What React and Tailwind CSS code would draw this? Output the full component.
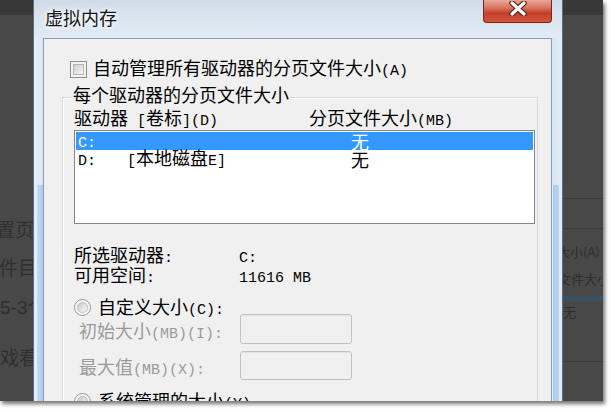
import React from "react";

const isLatin = (ch) => ch.charCodeAt(0) < 0x2e80;

function M({ text }) {
  const runs = [];
  for (const ch of text) {
    const l = isLatin(ch);
    const last = runs[runs.length - 1];
    if (last && last.l === l) last.s += ch;
    else runs.push({ l, s: ch });
  }
  return runs.map((r, i) =>
    r.l ? (
      <span key={i} className="font-['Liberation_Mono',monospace] text-[15px] whitespace-pre">
        {r.s}
      </span>
    ) : (
      <span key={i}>{r.s}</span>
    )
  );
}

function Checkbox() {
  return (
    <div className="w-[17px] h-[17px] shrink-0 border border-[#8f8f8f] bg-[#f4f4f4] p-[2px]">
      <div className="w-full h-full border border-[#b4b4b4] bg-gradient-to-br from-[#cfcfcf] to-[#f7f7f7]" />
    </div>
  );
}

function Radio() {
  return (
    <div className="w-[17px] h-[17px] shrink-0 rounded-full border border-[#969696] bg-[#f6f6f6] p-[2px]">
      <div className="w-full h-full rounded-full border border-[#bdbdbd] bg-gradient-to-br from-[#c8c8c8] to-[#fbfbfb]" />
    </div>
  );
}

function TextBox({ h }) {
  return (
    <div
      className={
        "w-[112px] shrink-0 rounded-[3px] border border-[#c2c2c2] bg-[#f0f0f0] shadow-[inset_0_1px_0_#e2e2e2] " +
        (h === 30 ? "h-[30px]" : "h-[29px]")
      }
    />
  );
}

function CloseButton() {
  return (
    <div className="ml-auto mr-[10px] w-[69px] h-[23px] shrink-0 rounded-b-[4px] border border-t-0 border-[#6e2a1f] bg-[linear-gradient(180deg,#e7a898_0%,#d9755f_35%,#c33e27_60%,#d25840_100%)] flex items-start justify-center shadow-[0_1px_0_#f4d9d2]">
      <svg width="18" height="15" viewBox="0 0 18 15" className="mt-[1px]">
        <path d="M3 2 L15 13 M15 2 L3 13" stroke="#5a2018" strokeWidth="5.5" strokeLinecap="round" />
        <path d="M3 2 L15 13 M15 2 L3 13" stroke="#ffffff" strokeWidth="3.2" strokeLinecap="round" />
      </svg>
    </div>
  );
}

export default function App() {
  return (
    <div className="w-[611px] h-[411px] bg-white overflow-hidden font-['Noto_Sans_CJK_SC',sans-serif] text-[18px] leading-[18px] text-black">
      <div className="w-[603px] h-[401px] bg-[#484848] flex overflow-hidden shadow-[2px_3px_4px_rgba(0,0,0,0.55)]">
        {/* left desktop strip */}
        <div className="w-[33px] shrink-0 flex flex-col overflow-hidden text-[19px] leading-[20px] text-[#2f2f2f] whitespace-nowrap">
          <div className="h-[15px] shrink-0 bg-[#383838]" />
          <div className="mt-[204px] -ml-[4px]">置页</div>
          <div className="mt-[18px] -ml-[1px]">件目</div>
          <div className="mt-[19px] font-['Liberation_Sans',sans-serif]">
            5-3<span className="font-['Noto_Sans_CJK_SC',sans-serif]">个</span>
          </div>
          <div className="mt-[29px]">戏看</div>
        </div>

        {/* dialog window */}
        <div className="w-[530px] shrink-0 flex flex-col border-l border-r border-[#5d6d7e] bg-[#dbe7f3]">
          {/* title bar */}
          <div className="h-[38px] shrink-0 flex items-start bg-[linear-gradient(180deg,#cfdbe8_0%,#dbe6f1_55%,#e2ebf5_100%)]">
            <div className="ml-[11px] mt-[7px] text-[18px] leading-[20px] text-[#151515] [text-shadow:0_0_5px_#ffffff,0_0_9px_#ffffff]">
              虚拟内存
            </div>
            <CloseButton />
          </div>

          <div className="flex flex-1 min-h-0">
            {/* left frame */}
            <div className="w-[9px] shrink-0 flex flex-col">
              <div className="h-[147px] shrink-0 bg-[linear-gradient(90deg,#e6eff8,#d7e5f3)]" />
              <div className="flex-1 flex">
                <div className="w-[3px] bg-[#e4eef8]" />
                <div className="flex-1 bg-[linear-gradient(90deg,#c5dcf2,#a9cbee)]" />
              </div>
            </div>

            {/* client area */}
            <div className="w-[509px] shrink-0 bg-[#f0f0f0] border border-b-0 border-[#8f9cab] flex flex-col">
              <div className="mt-[21px] ml-[26px] h-[18px] flex items-center gap-[6px]">
                <Checkbox />
                <span className="whitespace-nowrap">
                  <M text="自动管理所有驱动器的分页文件大小(A)" />
                </span>
              </div>

              {/* group box */}
              <div className="mt-[19px] ml-[18px] w-[476px] flex-1 relative border border-b-0 border-[#d3d9df] shadow-[inset_1px_1px_0_#ffffff] flex flex-col">
                <div className="absolute left-[9px] -top-[13px] px-[1px] bg-[#f0f0f0] whitespace-nowrap">
                  每个驱动器的分页文件大小
                </div>

                <div className="mt-[10px] ml-[11px] h-[18px] flex whitespace-nowrap">
                  <div className="w-[235px]">
                    <M text="驱动器 [卷标](D)" />
                  </div>
                  <div>
                    <M text="分页文件大小(MB)" />
                  </div>
                </div>

                {/* list box */}
                <div className="mt-[4px] ml-[11px] w-[461px] h-[94px] shrink-0 border border-[#828790] bg-white p-[1px] flex flex-col">
                  <div className="h-[18px] bg-[#3399ff] text-white flex items-center whitespace-nowrap">
                    <div className="w-[275px] pl-[2px]">
                      <M text="C:" />
                    </div>
                    <div>无</div>
                  </div>
                  <div className="h-[18px] flex items-center whitespace-nowrap">
                    <div className="w-[275px] pl-[2px] flex">
                      <div className="w-[49px]">
                        <M text="D:" />
                      </div>
                      <div>
                        <M text="[本地磁盘E]" />
                      </div>
                    </div>
                    <div>无</div>
                  </div>
                </div>

                <div className="mt-[21px] ml-[11px] h-[18px] flex whitespace-nowrap">
                  <div className="w-[165px]">
                    <M text="所选驱动器:" />
                  </div>
                  <div>
                    <M text="C:" />
                  </div>
                </div>
                <div className="mt-[2px] ml-[11px] h-[18px] flex whitespace-nowrap">
                  <div className="w-[165px]">
                    <M text="可用空间:" />
                  </div>
                  <div>
                    <M text="11616 MB" />
                  </div>
                </div>

                <div className="mt-[16px] ml-[11px] h-[17px] flex items-center gap-[7px] whitespace-nowrap">
                  <Radio />
                  <span className="mt-[2px]">
                    <M text="自定义大小(C):" />
                  </span>
                </div>

                <div className="-mt-[2px] ml-[16px] h-[30px] flex items-center whitespace-nowrap text-[#9b9b9b]">
                  <div className="w-[161px] mt-[7px]">
                    <M text="初始大小(MB)(I):" />
                  </div>
                  <TextBox h={30} />
                </div>
                <div className="mt-[7px] ml-[16px] h-[29px] flex items-center whitespace-nowrap text-[#9b9b9b]">
                  <div className="w-[161px] mt-[6px]">
                    <M text="最大值(MB)(X):" />
                  </div>
                  <TextBox h={29} />
                </div>

                <div className="mt-[13px] ml-[11px] h-[17px] flex items-center gap-[7px] whitespace-nowrap">
                  <Radio />
                  <span className="mt-[2px]">
                    <M text="系统管理的大小(Y)" />
                  </span>
                </div>
              </div>
            </div>

            {/* right frame */}
            <div className="w-[10px] shrink-0 flex flex-col">
              <div className="h-[147px] shrink-0 bg-[linear-gradient(90deg,#d7e5f3,#e3edf7)]" />
              <div className="flex-1 flex">
                <div className="w-[1px] bg-[#e6eff8]" />
                <div className="w-[6px] bg-[linear-gradient(90deg,#a6c8eb,#bcd6f0)]" />
                <div className="flex-1 bg-[#dfeaf5]" />
              </div>
            </div>
          </div>
        </div>

        {/* right desktop strip */}
        <div className="flex-1 min-w-0 flex flex-col overflow-hidden text-[13px] leading-[14px] text-[#2e2e2e] whitespace-nowrap">
          <div className="h-[15px] shrink-0 bg-[#383838]" />
          <div className="mt-[183px] h-[31px] shrink-0 border-t border-b border-[#3a3a3a]" />
          <div className="mt-[16px] -ml-[6px]">大小(A)</div>
          <div className="mt-[13px] -ml-[5px]">文件大小</div>
          <div className="mt-[10px] h-[5px] shrink-0 bg-[#3c5064]" />
          <div className="mt-[4px]">无</div>
          <div className="mt-[42px] h-[1px] shrink-0 bg-[#3a3a3a]" />
        </div>
      </div>
    </div>
  );
}
